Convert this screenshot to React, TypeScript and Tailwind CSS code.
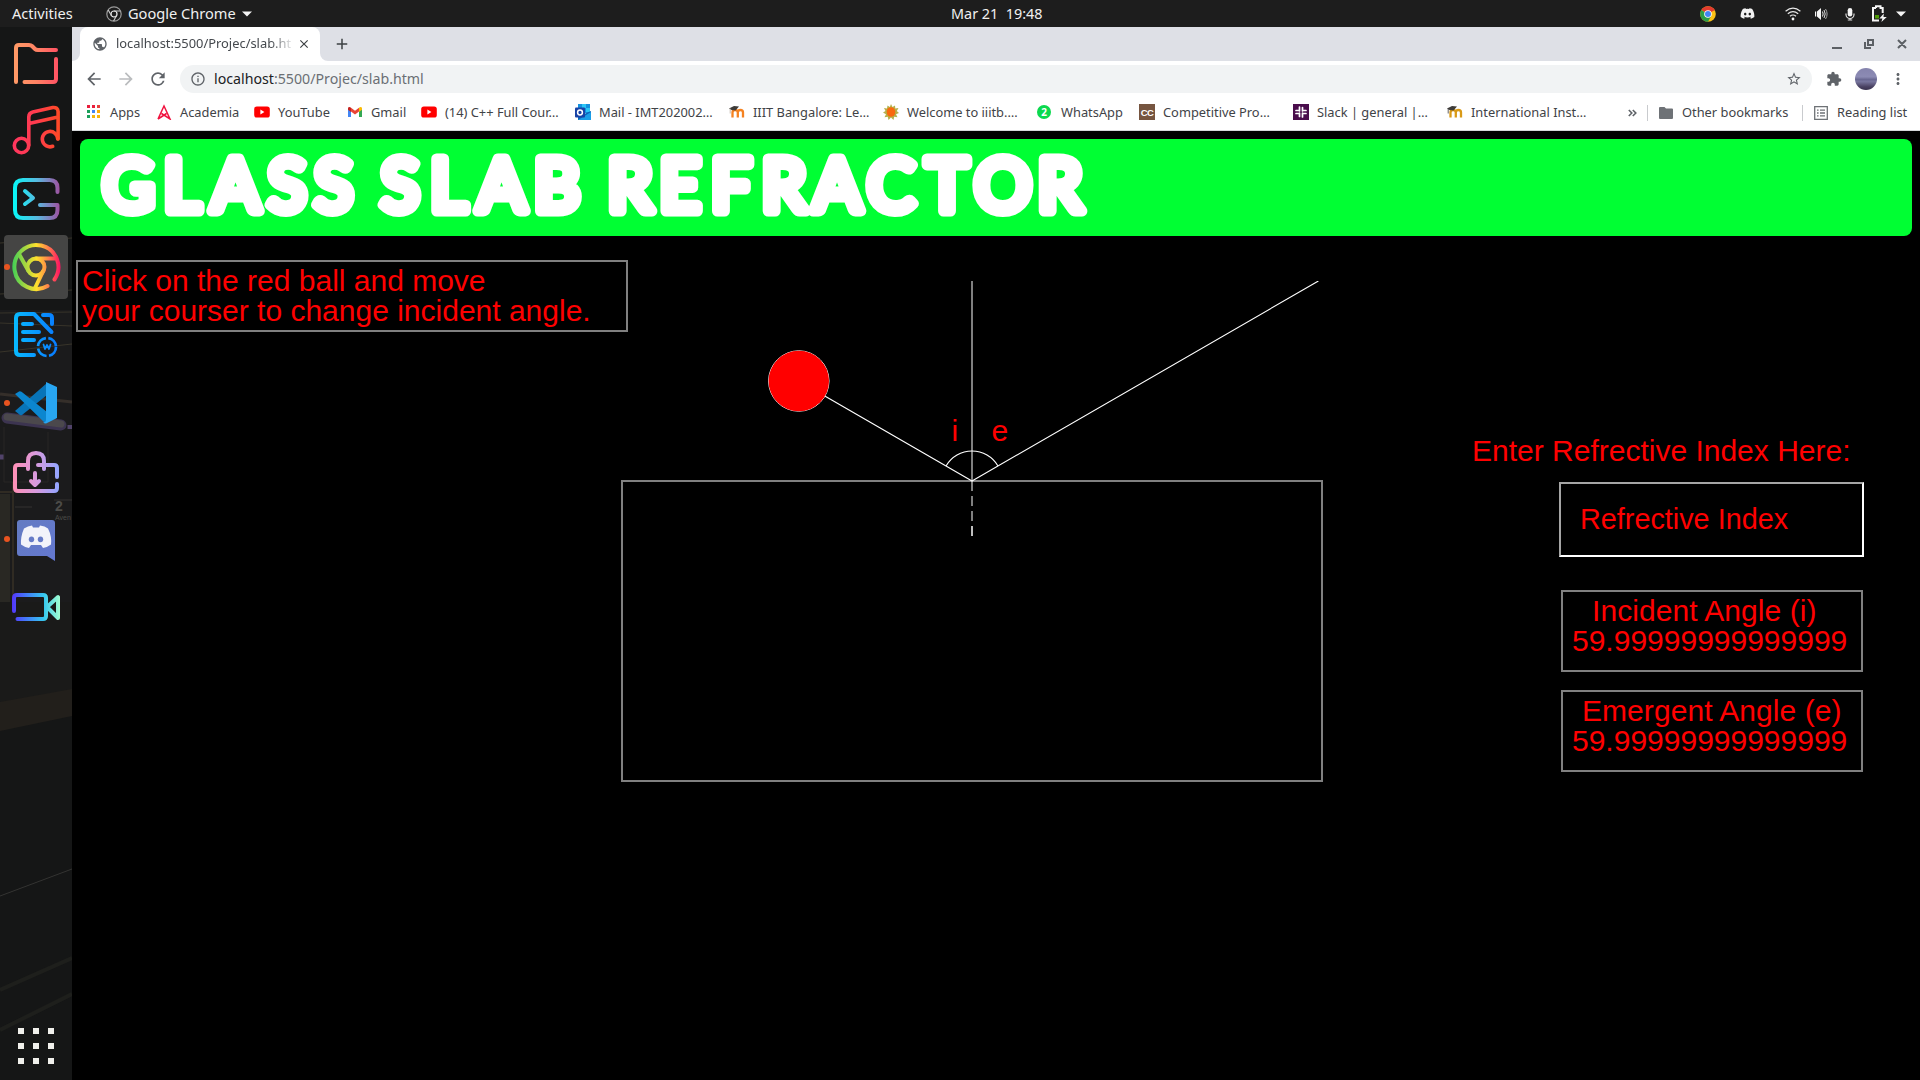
import React from "react";
import {
  MdArrowBack,
  MdArrowForward,
  MdRefresh,
  MdStarBorder,
  MdExtension,
  MdMoreVert,
  MdInfoOutline,
  MdPublic,
  MdClose,
  MdAdd,
} from "react-icons/md";
import { FaDiscord } from "react-icons/fa6";

const UI_FONT = "font-['Noto_Sans',sans-serif]";

function ChromeColor() {
  return (
    <svg className="h-4 w-4" viewBox="0 0 16 16">
      <circle cx="8" cy="8" r="7.8" fill="#fbc116" />
      <path d="M8 8 L1.25 4.1 A7.8 7.8 0 0 1 14.75 4.1 Z" fill="#e33b2e" />
      <path d="M8 8 L1.25 4.1 A7.8 7.8 0 0 0 8 15.8 L11.2 10 Z" fill="#2a9d48" />
      <path d="M8 4.2 H14.8 L14 3 L8 1 Z" fill="#e33b2e" />
      <circle cx="8" cy="8" r="3.8" fill="#fff" />
      <circle cx="8" cy="8" r="3" fill="#4285f4" />
    </svg>
  );
}

function ChromeOutline() {
  return (
    <svg className="h-4 w-4" viewBox="0 0 16 16" fill="none" stroke="#c9c9c9" strokeWidth="1.2">
      <circle cx="8" cy="8" r="7.2" stroke="#9a9a9a" />
      <circle cx="8" cy="8" r="3" stroke="#ededed" />
      <path d="M8 5h6.4M5.4 9.5 2.2 4M10.6 9.5 7.6 15" />
    </svg>
  );
}

function TopBar() {
  return (
    <div className={`flex h-[27px] w-full shrink-0 items-center bg-[#1d1d1d] text-[14.6px] leading-[27px] text-[#f0f0f0] ${UI_FONT}`}>
      <div className="w-[106px] pl-3">Activities</div>
      <ChromeOutline />
      <div className="ml-1.5 w-[112px] whitespace-nowrap">Google Chrome</div>
      <svg className="ml-0.5 h-1.5 w-[10px]" viewBox="0 0 10 6">
        <path d="M0 .5h10L5 5.5z" fill="#f4f4f4" />
      </svg>
      <div className="ml-[699px] w-[110px] text-[14.4px] whitespace-pre">Mar 21  19:48</div>
      <div className="ml-auto flex items-center pr-[14px]">
        <ChromeColor />
        <FaDiscord className="ml-6 h-[15px] w-[15px] text-[#f2f2f2]" />
        <svg className="ml-[30px] h-4 w-4" viewBox="0 0 16 16" fill="none" stroke="#e8e8e8" strokeWidth="1.2">
          <path d="M.6 5.2Q8-1 15.4 5.2M2.8 7.8Q8 3.4 13.2 7.8M5 10.3Q8 7.7 11 10.3" />
          <circle cx="8" cy="13" r="1.4" fill="#f5f5f5" stroke="none" />
        </svg>
        <svg className="ml-3.5 h-4 w-3.5" viewBox="0 0 14 16" fill="none" stroke="#aaa" strokeWidth="1">
          <path d="M0 5.5h1.2v5H0zM2 5.5 6 2v12L2 10.5z" fill="#f5f5f5" stroke="none" />
          <path d="M7.5 5.5q1.3 2.5 0 5" stroke="#f0f0f0" />
          <path d="M9 4q2.4 4 0 8" stroke="#ddd" />
          <path d="M10.5 3q3.2 5 0 10" />
        </svg>
        <svg className="ml-4 h-4 w-2.5" viewBox="0 0 10 16">
          <rect x="2.7" y="2" width="4.6" height="8.5" rx="2.3" fill="#f5f5f5" />
          <path d="M1 7.5v1a4 4 0 0 0 8 0v-1M5 12.5V14M2.8 14h4.4" fill="none" stroke="#ddd" strokeWidth="1.2" />
        </svg>
        <svg className="ml-[17px] h-[17px] w-[15px]" viewBox="0 0 15 17">
          <path d="M4 3V1.2h4.5V3h2.2v5M7 15.5H1V3h3" fill="none" stroke="#f5f5f5" strokeWidth="2" />
          <rect x="3" y="10" width="4" height="3.5" fill="#4e9a06" />
          <path d="m11.8 8.5-4.4 5h3l-1 3.5 5.4-5h-3.3z" fill="#f5f5f5" />
        </svg>
        <svg className="ml-[9px] h-1.5 w-[10px]" viewBox="0 0 10 6">
          <path d="M0 .5h10L5 5.5z" fill="#f4f4f4" />
        </svg>
      </div>
    </div>
  );
}

function DockSlot({ top, active, running, children }: { top: number; active?: boolean; running?: boolean; children: React.ReactNode }) {
  return (
    <div className={`h-16 w-16 shrink-0 rounded ${active ? "bg-[#454544]" : ""}`}>
      <svg className="h-16 w-16" viewBox={`4 ${top} 64 64`} fill="none" strokeLinecap="round" strokeLinejoin="round" strokeWidth="4">
        {running && <circle cx="7" cy={top + 32} r="3" fill="#e95420" />}
        {children}
      </svg>
    </div>
  );
}

function Grad({ id, x1, x2, stops, y1 = 0, y2 = 0 }: { id: string; x1: number; x2: number; y1?: number; y2?: number; stops: string[] }) {
  return (
    <linearGradient id={id} gradientUnits="userSpaceOnUse" x1={x1} x2={x2} y1={y1} y2={y2}>
      {stops.map((c, i) => (
        <stop key={i} offset={i / (stops.length - 1)} stopColor={c} />
      ))}
    </linearGradient>
  );
}

function Wallpaper() {
  return (
    <svg className="absolute inset-0 h-[1053px] w-[72px]" viewBox="0 27 72 1053">
      <rect y="27" width="72" height="1053" fill="#151616" />
      <rect y="310" width="72" height="330" fill="#1b1b1c" />
      <path d="M0 243 72 238M0 294 72 290M0 313 72 312M0 323 72 326M0 352 72 344" stroke="#38342a" strokeWidth="1" />
      <path d="M0 394 72 402" stroke="#352f2a" strokeWidth="3" />
      <path d="M7 418 61 425" stroke="#3c3450" strokeWidth="11" strokeLinecap="round" />
      <path d="M7 417 61 424" stroke="#4b484c" strokeWidth="7" strokeLinecap="round" />
      <path d="M0 457h4M70 425v4" stroke="#51436a" strokeWidth="5" />
      <path d="M4 427v55h44v-50" stroke="#282624" fill="none" strokeWidth="1" />
      <path d="M0 494h10v108H0z" fill="#292823" />
      <path d="M13 482v120M0 492h13" stroke="#302b23" strokeWidth="2" />
      <path d="M15 507h17M54 500h18" stroke="#343331" />
      <text x="55" y="511" fontSize="14" fontWeight="700" fill="#4c4b48" fontFamily="Liberation Sans">2</text>
      <text x="55" y="520" fontSize="7" fill="#4c4b48" fontFamily="Liberation Sans">Aven</text>
      <path d="M0 602h72v100H0z" fill="#1a1a19" />
      <path d="M0 702 72 689v27L0 731z" fill="#221f1b" />
      <path d="M0 896 72 869" stroke="#343432" />
      <path d="M0 990 72 958M0 1030 72 994" stroke="#1e1f1c" strokeWidth="4" />
    </svg>
  );
}

function Dock() {
  return (
    <div className="relative flex w-[72px] shrink-0 flex-col items-center overflow-hidden pt-1">
      <Wallpaper />
      <div className="relative flex flex-col gap-1">
        <DockSlot top={31}>
          <Grad id="folder" x1={14} x2={58} y1={60} y2={60} stops={["#ff9a66", "#ff8364", "#ff5263"]} />
          <path stroke="url(#folder)" d="M16 82V48q0-3 3-3h10q2 0 3 1l3 3q1 1 3 1h18M56 59v20q0 3-3 3H24.500" />
        </DockSlot>
        <DockSlot top={99}>
          <Grad id="music" x1={13} x2={60} stops={["#ff365f", "#ff3c4d", "#ff4a25"]} />
          <g stroke="url(#music)" strokeWidth="3.6">
            <circle cx="21.500" cy="145.500" r="7.200" />
            <path d="M28.800 145V117q0-4 4-5l20-4.500q5-.5 5.300 4V139M29 123.500 58 117" />
            <path d="M57.700 139a7.700 7.700 0 1 0-5 7.300" />
          </g>
        </DockSlot>
        <DockSlot top={167}>
          <Grad id="term" x1={14} x2={60} stops={["#08f7f7", "#58b9df", "#a04f9f"]} />
          <path stroke="url(#term)" d="M57.500 192v-4q0-8-8-8H23q-8 0-8 8v22q0 8 8 8h26.500q8 0 8-8v-5H40M25 191l8 7-8 6" />
        </DockSlot>
        <DockSlot top={235} active running>
          <linearGradient id="chr" gradientUnits="userSpaceOnUse" x1="13" x2="60" y1="267" y2="267">
            <stop offset="0" stopColor="#45cf55" />
            <stop offset=".5" stopColor="#ffe02d" />
            <stop offset=".75" stopColor="#ff7f4c" />
            <stop offset="1" stopColor="#ff1262" />
          </linearGradient>
          <g stroke="url(#chr)">
            <path d="M54.500 279.500A22 22 0 1 0 47.500 286" />
            <circle cx="36" cy="267" r="8.500" />
            <path d="M36 258.500h19M28.500 271 19 254M43 271.500 35 288" />
          </g>
        </DockSlot>
        <DockSlot top={303}>
          <Grad id="doc" x1={14} x2={58} stops={["#08baff", "#0999ff", "#087aff"]} />
          <g stroke="url(#doc)">
            <path d="M34 355H20q-4 0-4-4v-33q0-4 4-4h14L51.500 332M43 315h6q3 0 3 3v6M23 324h9M23 332h16M23 340h11" />
            <circle cx="47" cy="347" r="9" strokeWidth="2.700" strokeDasharray="12 2.500" strokeLinecap="butt" />
            <path d="m43.500 344.500 1.500 4.500 2-4 2 4 1.500-4.500" strokeWidth="1.800" />
          </g>
        </DockSlot>
        <DockSlot top={371} running>
          <path d="m15 411 5 4q1 .5 2 0l25-20v-12z" fill="#0874b8" />
          <path d="m15 394 4-2.500q1-.8 2.500.3L47 412v11q-1.500 0-3-1z" fill="#0b86cf" />
          <path d="m46 382 11 5v31l-11 5.500q-2 0-3-1.500 3 1 3-3z" fill="#28a6f2" />
        </DockSlot>
        <DockSlot top={439}>
          <Grad id="bag" x1={14} x2={58} stops={["#ff91b8", "#d99add", "#94a5ff"]} />
          <path stroke="url(#bag)" d="M28 469v-8q0-8 8-8t8 8v8M28 465H18q-3 0-3 3v20q0 3 3 3h36q3 0 3-3v-4M38 465h16q3 0 3 3v9M35 473v12M31 481l4 4 4-4" />
        </DockSlot>
        <DockSlot top={507} running>
          <linearGradient id="disc" x1="0" y1="0" x2="1" y2="1">
            <stop offset="0" stopColor="#637bc2" />
            <stop offset="1" stopColor="#6478d0" />
          </linearGradient>
          <path d="M20 520h32q3 0 3 3v38l-8-5H20q-3 0-3-3v-30q0-3 3-3z" fill="url(#disc)" />
          <path d="M24 528.500q4-2.500 8-3l1 2h6l1-2q5 .5 8 3 4 8 3 16-4 3-8 3.500l-2-3h-10l-2 3q-4-.5-8-3.500-.5-8 3-16z" fill="#f2f3fa" />
          <ellipse cx="31.500" cy="539.300" rx="2.700" ry="2.900" fill="#667bc7" />
          <ellipse cx="40.500" cy="539.300" rx="2.700" ry="2.900" fill="#667bc7" />
        </DockSlot>
        <DockSlot top={575}>
          <Grad id="cam" x1={12} x2={60} stops={["#5336fb", "#4182f8", "#36c9ef", "#a2ffd0"]} />
          <path stroke="url(#cam)" d="M14 611v-13q0-3 3-3h26q3 0 3 3v18q0 3-3 3H17.500M47 607l11-10v21z" />
        </DockSlot>
      </div>
      <div className="relative mt-auto mb-4 grid grid-cols-3 gap-[9px]">
        {Array.from({ length: 9 }, (_, i) => (
          <div key={i} className="h-1.5 w-1.5 bg-[#f0f0ec]" />
        ))}
      </div>
    </div>
  );
}

function TabStrip() {
  return (
    <div className="flex h-[34px] shrink-0 bg-[#dee0e6]">
      <div className="flex w-2 items-end bg-white">
        <div className="h-full w-full rounded-br-lg bg-[#dee0e6]" />
      </div>
      <div className="flex w-60 items-center rounded-t-lg bg-white pl-3">
        <MdPublic className="h-4 w-4 text-[#5f6368]" />
        <div className="ml-2 w-[175px] overflow-hidden text-[12.9px] whitespace-nowrap text-[#45494e] [mask-image:linear-gradient(to_right,black_88%,rgba(0,0,0,0.15))]">
          localhost:5500/Projec/slab.html
        </div>
        <MdClose className="ml-1.5 h-3.5 w-3.5 text-[#3c4043]" />
      </div>
      <div className="w-2 bg-white">
        <div className="h-full w-full rounded-bl-lg bg-[#dee0e6]" />
      </div>
      <MdAdd className="mt-2 ml-[5px] h-[18px] w-[18px] text-[#3c4043]" />
      <svg className="ml-auto h-[34px] w-[100px]" viewBox="1820 27 100 34" fill="none" stroke="#5c6065" strokeWidth="2">
        <path d="M1832 48h10M1868 40h5v5h-5zM1865 42v6h6M1898 40l8 8M1906 40l-8 8" />
      </svg>
    </div>
  );
}

function Toolbar() {
  return (
    <div className="flex h-9 shrink-0 items-center bg-white text-[#5f6368]">
      <MdArrowBack className="ml-3 h-5 w-5" />
      <MdArrowForward className="ml-3 h-5 w-5 text-[#babcbe]" />
      <MdRefresh className="ml-3 h-5 w-5" />
      <div className="ml-3 flex h-7 w-[1632px] items-center rounded-full bg-[#f1f3f4] pr-2.5 pl-2.5">
        <MdInfoOutline className="h-4 w-4" />
        <div className="ml-2 text-[14.2px] whitespace-nowrap text-[#6b6f74]">
          <span className="text-[#202124]">localhost</span>:5500/Projec/slab.html
        </div>
        <MdStarBorder className="ml-auto h-4 w-4" />
      </div>
      <MdExtension className="ml-3.5 h-4 w-4" />
      <div className="ml-[13px] h-[22px] w-[22px] overflow-hidden rounded-full bg-[linear-gradient(#8583ad_0%,#8c8bb4_40%,#6a6993_52%,#77759d_62%,#4a4262_85%,#39324e_100%)]" />
      <MdMoreVert className="ml-3 h-[18px] w-[18px]" />
    </div>
  );
}

function AppsIcon() {
  const colors = ["#ea1e3c", "#ea1e3c", "#e8413c", "#1aa05a", "#4285f4", "#fbaa0b", "#1aa05a", "#f5b50c", "#f7b50c"];
  return (
    <svg className="h-4 w-4" viewBox="0 0 16 16">
      {colors.map((c, i) => (
        <rect key={i} x={1 + (i % 3) * 5} y={1 + Math.floor(i / 3) * 5} width="3" height="3" fill={c} />
      ))}
    </svg>
  );
}

function AcademiaIcon() {
  return (
    <svg className="h-4 w-4" viewBox="0 0 16 16" fill="none" stroke="#f0133f" strokeWidth="1.500">
      <path d="M2 15 8 2 14 15 5.500 9.500M2 15 10.500 9.500" />
    </svg>
  );
}

function YoutubeIcon() {
  return (
    <svg className="h-4 w-4" viewBox="0 0 16 16">
      <rect x=".2" y="2.500" width="15.600" height="11" rx="2.600" fill="#f00" />
      <path d="M6.400 5.600v4.800l4-2.400z" fill="#fff" />
    </svg>
  );
}

function GmailIcon() {
  return (
    <svg className="h-4 w-4" viewBox="0 0 16 16">
      <path d="M1 4v9h3V7z" fill="#4285f4" />
      <path d="M15 4v9h-3V7z" fill="#34a853" />
      <path d="M4 7.500V3.800l4 3 4-3v3.700l-4 3z" fill="#ea4335" />
      <path d="M1 4.500v1.300L4 8V3.800C2.700 2.500 1 3 1 4.500z" fill="#c5221f" />
      <path d="M15 4.500v1.300L12 8V3.800c1.300-1.300 3-.8 3 .7z" fill="#fbbc04" />
    </svg>
  );
}

function OutlookIcon() {
  return (
    <svg className="h-4 w-4" viewBox="0 0 16 16">
      <rect x="3" width="12" height="9" fill="#1490df" />
      <path d="M7 0h4v4H7zM11 4h4v4h-4z" fill="#2bc6f5" />
      <path d="M3 8l6 2 7-3v9H3z" fill="#0a64b9" />
      <path d="M3 16 16 8v8z" fill="#1a9ee8" />
      <rect y="3.500" width="10" height="10" rx="1" fill="#1843a6" />
      <circle cx="5" cy="8.500" r="2.400" fill="none" stroke="#fff" strokeWidth="1.500" />
    </svg>
  );
}

function MoodleIcon({ gold }: { gold?: boolean }) {
  return (
    <svg className="h-4 w-4" viewBox="0 0 16 16">
      <path
        d="M3.500 13.500V8.500q0-2.500 2.600-2.500t2.700 2.500v5M8.800 8.500q0-2.500 2.600-2.500T14 8.500v5"
        fill="none"
        stroke={gold ? "#d99a17" : "#f58220"}
        strokeWidth="2.300"
      />
      <path d="M0 4.500 5 2l5 .5-3.500 4-4-.5z" fill="#3d3b38" />
      <path d="M1.200 4.500v5" stroke={gold ? "#3d3b38" : "#b5aaa0"} strokeWidth=".8" />
    </svg>
  );
}

function SunIcon() {
  return (
    <svg className="h-4 w-4" viewBox="0 0 16 16">
      <path d="m8 0 1.500 3L12 1.500l.3 3 3.200-.5-1.700 3L16 9l-3 1.200 1.500 3-3.300-.5L10.500 16 8 13.500 5.500 16l-.8-3.300-3.200.5 1.500-3L0 8.500 2.500 7 1 4l3 .5L4.500 1.500 6.800 3z" fill="#b6b04a" />
      <ellipse cx="8" cy="8" rx="4.300" ry="4.800" fill="#f9690e" />
    </svg>
  );
}

function WhatsappIcon() {
  return (
    <div className="-ml-0.5 flex h-3.5 w-[18px] items-center justify-center">
      <div className="flex h-3.5 w-3.5 items-center justify-center rounded-full bg-[#0bd94e] text-[10px] leading-none font-bold text-white">2</div>
    </div>
  );
}

function CodechefIcon() {
  return (
    <div className="flex h-4 w-4 items-center justify-center bg-[#765540] font-['Liberation_Sans',sans-serif] text-[9.5px] leading-none font-bold tracking-[-0.5px] text-white">
      CC
    </div>
  );
}

function SlackIcon() {
  return (
    <svg className="h-4 w-4" viewBox="0 0 16 16">
      <rect width="16" height="16" fill="#4a0d4c" />
      <path d="M6.500 3v4M9.500 9v4M9.500 3.500V7M6.500 9v3.500M3 6.500h3.500M9.500 6.500H13M3 9.500h3.500M9.500 9.500H13" stroke="#fff" strokeWidth="1.700" strokeLinecap="round" />
    </svg>
  );
}

const bookmarks = [
  { label: "Apps", width: "w-[70px]", icon: <AppsIcon /> },
  { label: "Academia", width: "w-[98px]", icon: <AcademiaIcon /> },
  { label: "YouTube", width: "w-[93px]", icon: <YoutubeIcon /> },
  { label: "Gmail", width: "w-[74px]", icon: <GmailIcon /> },
  { label: "(14) C++ Full Cour…", width: "w-[154px]", icon: <YoutubeIcon /> },
  { label: "Mail - IMT202002…", width: "w-[154px]", icon: <OutlookIcon /> },
  { label: "IIIT Bangalore: Le…", width: "w-[154px]", icon: <MoodleIcon /> },
  { label: "Welcome to iiitb.…", width: "w-[154px]", icon: <SunIcon /> },
  { label: "WhatsApp", width: "w-[102px]", icon: <WhatsappIcon /> },
  { label: "Competitive Pro…", width: "w-[154px]", icon: <CodechefIcon /> },
  { label: "Slack | general |…", width: "w-[154px]", icon: <SlackIcon /> },
  { label: "International Inst…", width: "w-[154px]", icon: <MoodleIcon gold /> },
];

function BookmarksBar() {
  return (
    <div className="flex h-[34px] shrink-0 items-center border-b border-[#d5d7da] bg-white pb-0.5 pl-[14px] text-[12.85px] text-[#3f4347]">
      {bookmarks.map((b) => (
        <div key={b.label} className={`flex shrink-0 items-center gap-2 whitespace-nowrap ${b.width}`}>
          {b.icon}
          <span>{b.label}</span>
        </div>
      ))}
      <svg className="ml-[27px] h-2 w-[9px]" viewBox="0 0 9 8" fill="none" stroke="#5f6368" strokeWidth="1.600">
        <path d="m.8 1 3 3-3 3M4.800 1l3 3-3 3" />
      </svg>
      <div className="ml-[10px] h-4 w-px bg-[#c9cbce]" />
      <svg className="ml-[11px] h-3 w-3.5" viewBox="0 0 14 12">
        <path d="M1 0h4.500L7 1.500h6q1 0 1 1V11q0 1-1 1H1q-1 0-1-1V1q0-1 1-1z" fill="#6e7276" />
      </svg>
      <span className="ml-[9px] w-[120px] whitespace-nowrap">Other bookmarks</span>
      <div className="h-4 w-px bg-[#c9cbce]" />
      <svg className="ml-[11px] h-3.5 w-3.5" viewBox="0 0 14 14" fill="none" stroke="#6e7276" strokeWidth="1.300">
        <path d="M.7.7h12.600v12.600H.7zM3 4.200h1.600M6 4.200h5M3 7h1.600M6 7h5M3 9.800h1.600M6 9.800h5" />
      </svg>
      <span className="ml-[9px] whitespace-nowrap">Reading list</span>
    </div>
  );
}

const TITLE = "GLASS SLAB REFRACTOR";
const TITLE_X = [
  128.5, 182, 235.5, 287, 333.5, 366, 400, 448.5, 501.5, 557, 594, 630, 680, 731, 784, 837, 891, 947, 1003, 1060,
];

function Banner() {
  return (
    <h1 className="mt-2 ml-2 h-[97px] w-[1832px] overflow-hidden rounded-lg bg-[#00ff33]">
      <svg className="h-[97px] w-[1100px]" viewBox="80 139 1100 97">
        <text
          x={TITLE_X.join(" ")}
          y="211.300"
          textAnchor="middle"
          fontFamily="Lato, sans-serif"
          fontSize="71"
          fontWeight="400"
          fill="#fff"
          stroke="#fff"
          strokeWidth="11"
          strokeLinejoin="round"
          strokeLinecap="round"
        >
          {TITLE}
        </text>
      </svg>
    </h1>
  );
}

function Diagram() {
  return (
    <svg className="mt-[45px] h-[520px] w-[704px] shrink-0" viewBox="620 281 704 520" fill="none" stroke="#fff" strokeWidth="1">
      <rect x="621" y="480" width="702" height="302" stroke="none" fill="#808080" />
      <rect x="623" y="482" width="698" height="298" stroke="none" fill="#000" />
      <path d="M972 281v200" />
      <path d="M972 481v60" strokeDasharray="10 5" />
      <path d="M972 526v10" />
      <path d="M972 481 798.800 381M972 481 1318.400 281" strokeWidth="1.150" />
      <path d="M946 466A30 30 0 0 1 998 466" strokeWidth="1.150" />
      <circle cx="798.800" cy="381" r="30.200" />
      <circle cx="798.800" cy="381" r="30.200" fill="#f00" stroke="none" />
      <g fill="#f00" stroke="none" fontFamily="Liberation Sans, sans-serif" fontSize="30">
        <text x="951.500" y="441">i</text>
        <text x="991.500" y="441">e</text>
      </g>
    </svg>
  );
}

function AngleBox({ label, pad }: { label: string; pad: string }) {
  return (
    <div className="ml-[89px] h-[82px] w-[302px] border-2 border-[#808080] pt-1">
      <div className={pad}>{label}</div>
      <div className="pl-[9px]">59.99999999999999</div>
    </div>
  );
}

function Page() {
  return (
    <div className="flex grow flex-col bg-black">
      <Banner />
      <div className="flex font-['Liberation_Sans',sans-serif] text-[30px] leading-[30px] whitespace-nowrap text-[#ff0000]">
        <div className="mt-6 ml-1 h-[72px] w-[552px] border-2 border-[#808080] pt-[4px] pl-1">
          Click on the red ball and move
          <br />
          your courser to change incident angle.
        </div>
        <div className="-ml-2">
          <Diagram />
        </div>
        <div className="mt-[200px] ml-[148px] flex w-[393px] flex-col">
          <div>Enter Refrective Index Here:</div>
          <input
            readOnly
            value="Refrective Index"
            className="mt-4 ml-[87px] h-[75px] w-[305px] border-2 border-t-[#a5a5a5] border-r-white border-b-white border-l-[#a5a5a5] bg-transparent pl-[19px] text-[28.8px] outline-none"
          />
          <div className="mt-[33px] flex flex-col gap-[18px]">
            <AngleBox label="Incident Angle (i)" pad="pl-[29px] tracking-[0.06px]" />
            <AngleBox label="Emergent Angle (e)" pad="pl-[19px] tracking-[0.06px]" />
          </div>
        </div>
      </div>
    </div>
  );
}

export default function App() {
  return (
    <div className="flex h-[1080px] w-[1920px] flex-col overflow-hidden bg-black">
      <TopBar />
      <div className="flex min-h-0 grow">
        <Dock />
        <div className={`flex w-[1848px] flex-col ${UI_FONT}`}>
          <TabStrip />
          <Toolbar />
          <BookmarksBar />
          <Page />
        </div>
      </div>
    </div>
  );
}
